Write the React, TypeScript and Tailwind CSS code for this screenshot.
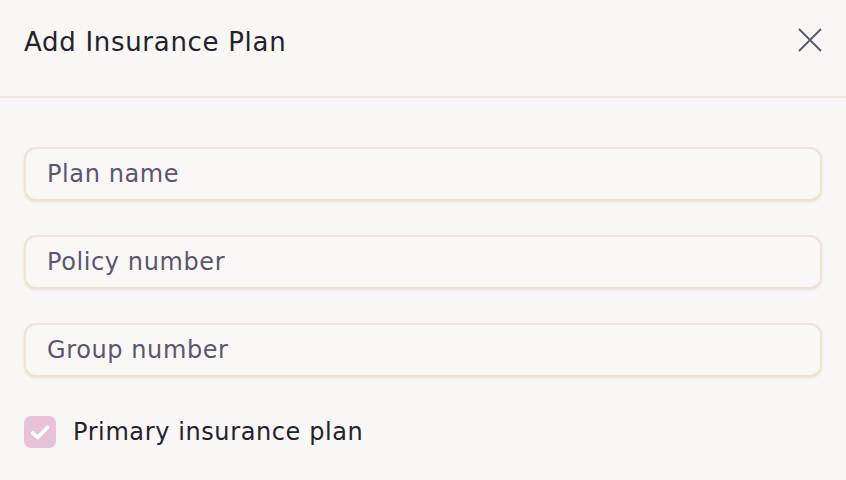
import React from "react";

export default function App() {
  const fields = ["Plan name", "Policy number", "Group number"];
  return (
    <div className="w-[846px] h-[480px] bg-[#f8f7f5] overflow-hidden" style={{ fontFamily: '"DejaVu Sans", "Open Sans", sans-serif' }}>
      <div className="h-[98px] flex items-start justify-between pl-[24px] pr-[24px] pt-[24px] border-b-2 border-[#eee6d8]">
        <h2 className="text-[26px] leading-[36px] tracking-[0.7px] text-[#24222b]">Add Insurance Plan</h2>
        <button className="w-[24px] h-[24px] mt-[4px] text-[#5b5670]">
          <svg viewBox="0 0 24 24" width="24" height="24" fill="none" stroke="currentColor" strokeWidth="1.8">
            <path d="M1 1L23 23M23 1L1 23" />
          </svg>
        </button>
      </div>
      <div className="px-[24px] pt-[49px] flex flex-col gap-[34px]">
        {fields.map((f) => (
          <input
            key={f}
            placeholder={f}
            className="h-[54px] w-full rounded-[12px] border-2 border-[#efe4d2] bg-[#f9f8f6] px-[21px] text-[24px] tracking-[0.6px] text-[#24222b] placeholder:text-[#5b5670] shadow-[0_1px_2px_rgba(200,180,150,0.3)] outline-none"
          />
        ))}
      </div>
      <div className="px-[24px] mt-[37px] flex items-center gap-[17px]">
        <div className="w-[32px] h-[32px] rounded-[7px] bg-[#e8c2d8] flex items-center justify-center">
          <svg viewBox="0 0 24 24" width="22" height="22" fill="none" stroke="#ffffff" strokeWidth="4" strokeLinecap="round" strokeLinejoin="round">
            <path d="M4 13L9.5 18L20 7" />
          </svg>
        </div>
        <span className="text-[24px] tracking-[0.6px] text-[#24222b]">Primary insurance plan</span>
      </div>
    </div>
  );
}
